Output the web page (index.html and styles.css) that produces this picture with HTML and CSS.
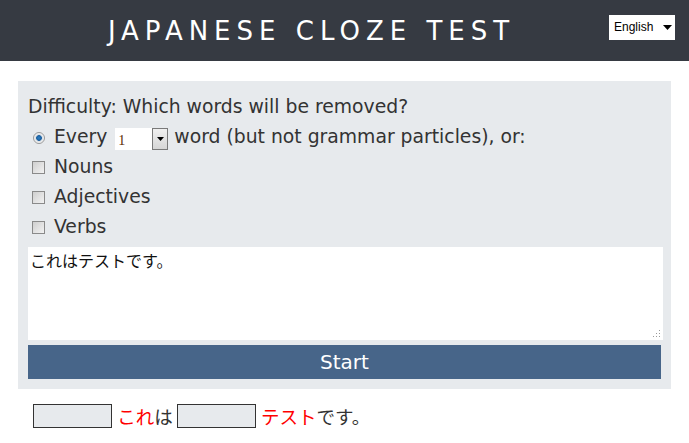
FILE: index.html
```html
<!DOCTYPE html>
<html lang="ja">
<head>
<meta charset="utf-8">
<title>Japanese Cloze Test</title>
<link rel="stylesheet" href="styles.css">
</head>
<body>
<header class="topbar">
  <h1 class="title">JAPANESE CLOZE TEST</h1>
  <div class="lang">
    <select class="lang-select"><option>English</option></select>
    <svg class="lang-arrow" width="9" height="5" viewBox="0 0 9 5"><path d="M0 0H9L4.5 5Z" fill="#000"/></svg>
  </div>
</header>
<main class="page">
  <form class="panel">
    <p class="row">Difficulty: Which words will be removed?</p>
    <label class="row"><input class="radio" type="radio" name="mode" checked> Every <span class="num"><select class="num-select"><option>1</option><option>2</option><option>3</option></select><span class="num-btn"><svg width="7" height="4" viewBox="0 0 7 4"><path d="M0 0H7L3.5 4Z" fill="#000"/></svg></span></span> word (but not grammar particles), or:</label>
    <label class="row"><input class="check" type="checkbox"> Nouns</label>
    <label class="row"><input class="check" type="checkbox"> Adjectives</label>
    <label class="row"><input class="check" type="checkbox"> Verbs</label>
    <div class="text-wrap">
      <textarea class="source">これはテストです。</textarea>
      <span class="grip"></span>
    </div>
    <button class="start" type="button">Start</button>
  </form>
  <div class="result"><input class="blank" type="text"> <span class="hl">これ</span>は <input class="blank" type="text"> <span class="hl">テスト</span>です。</div>
</main>
</body>
</html>
```
FILE: styles.css
```css
html, body {
  margin: 0;
  padding: 0;
  background: #fff;
}
body {
  font-family: "DejaVu Sans", Verdana, sans-serif;
  color: #333;
}
.topbar {
  height: 61px;
  background: #363a42;
  display: flex;
  align-items: center;
}
.title {
  flex: 1;
  margin: 0;
  padding-left: 14px;
  text-align: center;
  font-family: "DejaVu Sans", sans-serif;
  font-weight: normal;
  font-size: 26px;
  letter-spacing: 6px;
  color: #fff;
}
.lang {
  display: flex;
  align-items: center;
  width: 66px;
  height: 25px;
  margin-right: 14px;
  margin-top: -7px;
  background: #fff;
  box-sizing: border-box;
}
.lang-select {
  appearance: none;
  -webkit-appearance: none;
  border: none;
  background: transparent;
  font-family: "Liberation Sans", Arial, sans-serif;
  font-size: 12px;
  color: #000;
  padding: 0 0 0 5px;
  width: 54px;
  height: 25px;
  outline: none;
}
.lang-arrow {
  margin-left: 0;
}
.page {
  padding: 20px 18px 0;
}
.panel {
  background: #e7eaed;
  padding: 11px 8px 10px 10px;
  margin: 0;
}
.row {
  display: block;
  margin: 0;
  height: 30px;
  line-height: 30px;
  font-size: 18.8px;
  white-space: nowrap;
}
.radio {
  appearance: none;
  -webkit-appearance: none;
  width: 12px;
  height: 12px;
  margin: 0 3px 0 5px;
  border-radius: 50%;
  border: 1px solid #9a9a9a;
  box-sizing: border-box;
  background: radial-gradient(circle at 50% 50%, #2b7fc4 0, #1c5f9f 2.5px, #d8dde2 3.2px, #f4f4f4 5px);
  vertical-align: -1px;
}
.check {
  appearance: none;
  -webkit-appearance: none;
  width: 13px;
  height: 13px;
  margin: 0 3px 0 4px;
  border: 1px solid #8a8a8a;
  box-sizing: border-box;
  background: linear-gradient(135deg, #cfcfcf, #f2f2f2);
  vertical-align: -1px;
}
.num {
  display: inline-flex;
  align-items: stretch;
  height: 22px;
  vertical-align: -2px;
  margin-left: 2px;
}
.num-select {
  appearance: none;
  -webkit-appearance: none;
  width: 37px;
  height: 22px;
  border: none;
  background: #fff;
  font-family: "Liberation Serif", "Times New Roman", serif;
  font-size: 14px;
  color: #5a2a00;
  padding: 3px 0 0 3px;
  box-sizing: border-box;
  outline: none;
}
.num-btn {
  display: flex;
  align-items: center;
  justify-content: center;
  width: 16px;
  border: 1px solid #7a7a7a;
  box-sizing: border-box;
  background: linear-gradient(#f0f0f0, #d6d6d6);
}
.text-wrap {
  position: relative;
  margin-top: 5px;
  width: 635px;
  height: 93px;
}
.source {
  display: block;
  width: 635px;
  height: 93px;
  box-sizing: border-box;
  border: 1px solid #fff;
  background: #fff;
  padding: 2px 1px;
  margin: 0;
  resize: none;
  font-family: "Noto Sans CJK JP", sans-serif;
  font-size: 16px;
  line-height: 21px;
  color: #111;
  outline: none;
}
.grip {
  position: absolute;
  right: 3px;
  bottom: 3px;
  width: 8px;
  height: 8px;
  background:
    radial-gradient(circle, #9a9a9a 0.9px, transparent 1px) 0 0 / 3px 3px;
  clip-path: polygon(100% 0, 100% 100%, 0 100%);
}
.start {
  display: block;
  margin-top: 5px;
  width: 633px;
  height: 34px;
  border: none;
  background: #476589;
  color: #fff;
  font-family: "DejaVu Sans", Verdana, sans-serif;
  font-size: 20px;
  padding: 0;
}
.result {
  padding: 15px 15px;
  font-family: "Noto Sans CJK JP", sans-serif;
  font-size: 18.5px;
  line-height: 24px;
  color: #333;
}
.blank {
  width: 79px;
  height: 24px;
  box-sizing: border-box;
  border: 1px solid #333;
  background: #e7eaed;
  margin: 0 1px 0 0;
  padding: 0;
  vertical-align: top;
}
.hl {
  color: #f00;
}
```
